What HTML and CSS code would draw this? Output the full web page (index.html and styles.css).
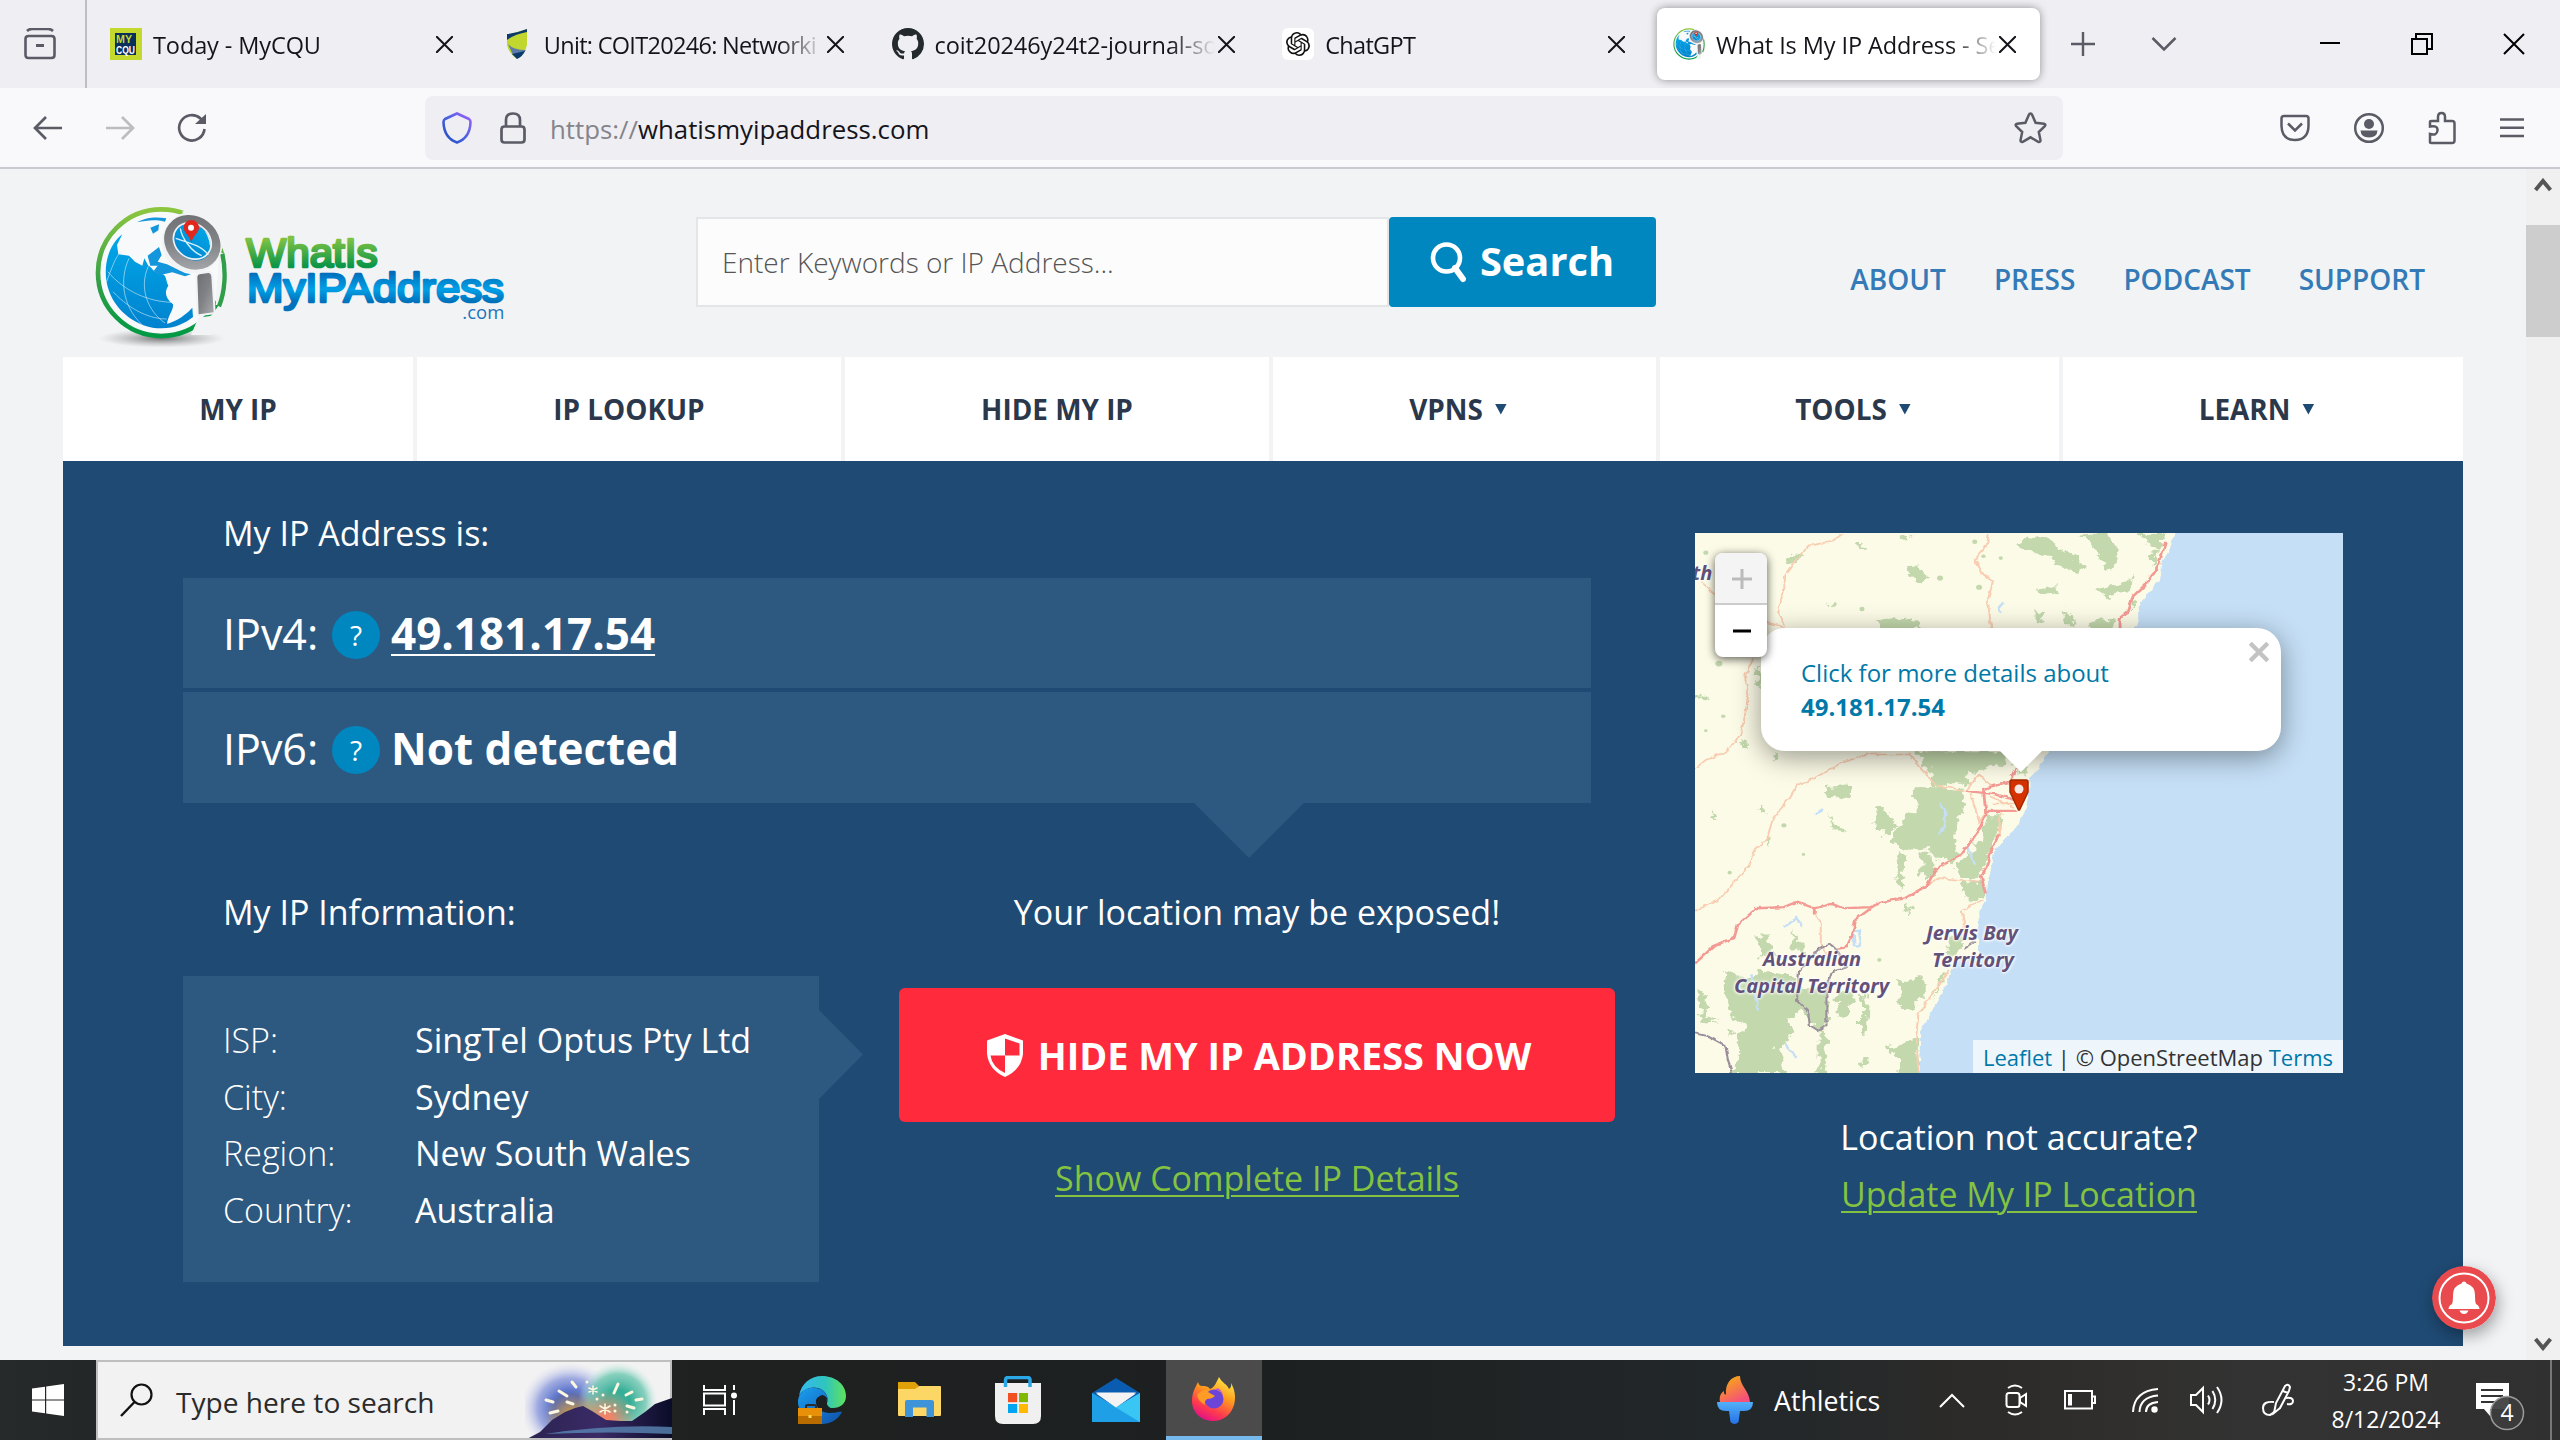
FILE: index.html
```html
<!DOCTYPE html>
<html lang="en">
<head>
<meta charset="utf-8">
<title>What Is My IP Address</title>
<link rel="stylesheet" href="styles.css">
</head>
<body>
<svg class="defs" width="0" height="0" aria-hidden="true">
  <defs>
    <linearGradient id="ring" x1="0" y1="0" x2="0" y2="1"><stop offset="0" stop-color="#8cc63f"/><stop offset=".6" stop-color="#2f9e48"/><stop offset="1" stop-color="#009a44"/></linearGradient>
    <linearGradient id="ocean" x1="0" y1="0" x2="0" y2="1"><stop offset="0" stop-color="#00a8e8"/><stop offset="1" stop-color="#0082cf"/></linearGradient>
    <linearGradient id="steel" x1="0" y1="0" x2="1" y2="1"><stop offset="0" stop-color="#6f7073"/><stop offset=".5" stop-color="#808285"/><stop offset="1" stop-color="#a9abae"/></linearGradient>
    <radialGradient id="shade"><stop offset="0" stop-color="#555" stop-opacity=".8"/><stop offset="1" stop-color="#999" stop-opacity="0"/></radialGradient>
    <symbol id="x" viewBox="0 0 16 16"><path d="M0 0 16 16M16 0 0 16" fill="none" stroke="currentColor" stroke-width="1.9"/></symbol>
    <symbol id="globe" viewBox="30 32 398 402">
      <circle cx="229" cy="233" r="183" fill="#f7f9fa"/>
      <circle cx="229" cy="233" r="190" fill="none" stroke="url(#ring)" stroke-width="14"/>
      <path d="M112 118C70 150 52 215 68 275 88 350 160 400 229 400 270 400 300 385 324 366L322 338C290 372 262 382 246 386 250 360 266 345 264 328 240 310 238 290 250 272 240 250 246 240 228 236 205 234 200 215 190 212L178 190 172 212 150 200 132 182 100 178 96 150Z" fill="url(#ocean)"/>
      <path d="M156 82C190 64 215 66 244 70L240 80C210 72 185 76 156 82ZM196 98 222 88 220 106 204 116ZM188 182 222 156 230 180 218 200 246 208 300 234 318 238 300 244 262 232 226 240 206 228 218 212 196 212Z" fill="#1496dc"/>
      <path d="M68 230C120 290 190 320 262 322M84 290C140 350 200 372 245 372M132 190C104 250 110 330 170 388M190 214C160 280 190 350 240 384M64 262C90 190 98 180 108 170" fill="none" stroke="#cfeaf8" stroke-opacity=".75" stroke-width="2.5"/>
      <path d="M392 330 402 170 430 180 428 330ZM290 50 330 40 330 80ZM318 420 380 420 380 362 340 368Z" fill="#f1f3f5"/>
      <path d="M402 334C420 290 424 230 412 176" fill="none" stroke="#2f9e48" stroke-width="13"/>
      <circle cx="322" cy="142" r="92" fill="#f1f3f5"/>
      <ellipse cx="322" cy="142" rx="73" ry="64" transform="rotate(35 322 142)" fill="url(#ocean)"/>
      <path d="M272 130C300 140 350 150 370 180M286 100C290 130 320 170 350 182M350 90C365 110 375 130 376 150" fill="none" stroke="#d7effa" stroke-width="4"/>
      <ellipse cx="322" cy="142" rx="75" ry="64" transform="rotate(38 322 142)" fill="none" stroke="url(#steel)" stroke-width="27"/>
      <ellipse cx="322" cy="138" rx="60" ry="51" transform="rotate(38 322 138)" fill="none" stroke="#eef1f3" stroke-width="5"/>
      <path d="M344 238 370 234Q378 235 379 245L386 352 341 358 337 246Q338 239 344 238Z" fill="url(#steel)" stroke="#f1f3f5" stroke-width="12" paint-order="stroke"/>
      <path d="M319 142C314 120 296 114 296 98A23 23 0 0 1 342 98C342 114 324 120 319 142Z" fill="#e0281e"/>
      <circle cx="318" cy="98" r="9" fill="#fff"/>
    </symbol>
  </defs>
</svg>

<div class="tabs">
  <div class="view-btn"><svg width="32" height="32" viewBox="0 0 32 32"><path d="M3 3Q5 1 8 1H24Q27 1 29 3M1.500 11Q1.500 8 4.500 8H27.500Q30.500 8 30.500 11V27Q30.500 30 27.500 30H4.500Q1.500 30 1.500 27Z" fill="none" stroke="#5b5b66" stroke-width="2.6"/><path d="M12 16H20V19H12Z" fill="#5b5b66"/></svg></div>
  <div class="tab"><svg class="fav" viewBox="0 0 32 32"><path d="M0 0H32V32H0Z" fill="#c4d82e"/><path d="M5 5H26V27H5Z" fill="#0a2f5c"/><text x="6" y="15" font-family="Liberation Sans" font-weight="700" font-size="10.500" textLength="16" lengthAdjust="spacingAndGlyphs" fill="#c4d82e">MY</text><text x="6" y="25.500" font-family="Liberation Sans" font-weight="700" font-size="10.500" textLength="19" lengthAdjust="spacingAndGlyphs" fill="#fff">CQU</text></svg><span class="tab-text">Today - MyCQU</span><svg class="close"><use href="#x"/></svg></div>
  <div class="tab"><svg class="fav" viewBox="0 0 32 32"><path d="M6 7 26 1V17Q24 26 16 31 8 26 6 17Z" fill="#c1d72e"/><path d="M6 6Q16 5 26 1V4Q14 6 6 12Z" fill="#0b3a6b"/><path d="M7 16Q12 22 25 22L20 28 12 27Z" fill="#5c7ba8"/><path d="M11 26 24 23Q22 28 16 31Z" fill="#0b3a6b"/></svg><span class="tab-text tight">Unit: COIT20246: Networki</span><svg class="close"><use href="#x"/></svg></div>
  <div class="tab"><svg class="fav" viewBox="0 0 16 16"><path fill="#24292e" d="M8 0C3.580 0 0 3.580 0 8c0 3.540 2.290 6.530 5.470 7.590.4.070.550-.170.550-.380 0-.190-.010-.820-.010-1.490-2.010.370-2.530-.490-2.690-.940-.090-.230-.480-.940-.820-1.130-.280-.150-.680-.520-.010-.530.630-.010 1.080.580 1.230.820.720 1.210 1.870.870 2.330.660.070-.520.280-.870.510-1.070-1.780-.2-3.640-.890-3.640-3.950 0-.870.310-1.590.820-2.150-.080-.2-.360-1.020.080-2.120 0 0 .670-.210 2.200.820.640-.180 1.320-.270 2-.270s1.360.090 2 .270c1.530-1.040 2.200-.820 2.200-.820.440 1.100.160 1.920.080 2.120.510.560.820 1.270.820 2.150 0 3.070-1.870 3.750-3.650 3.950.290.250.540.730.540 1.480 0 1.070-.010 1.930-.010 2.200 0 .210.150.460.550.380A8.010 8.010 0 0 0 16 8c0-4.420-3.580-8-8-8z"/></svg><span class="tab-text">coit20246y24t2-journal-so</span><svg class="close"><use href="#x"/></svg></div>
  <div class="tab"><svg class="fav" viewBox="0 0 32 32"><rect width="32" height="32" rx="6" fill="#fff"/><g transform="translate(4 4)" fill="#111"><path d="M22.282 9.821a5.985 5.985 0 0 0-.516-4.910 6.046 6.046 0 0 0-6.510-2.900A6.065 6.065 0 0 0 4.981 4.182a5.985 5.985 0 0 0-3.998 2.900 6.046 6.046 0 0 0 .743 7.097 5.980 5.980 0 0 0 .511 4.911 6.051 6.051 0 0 0 6.515 2.900A5.985 5.985 0 0 0 13.260 24a6.056 6.056 0 0 0 5.772-4.206 5.990 5.990 0 0 0 3.998-2.900 6.056 6.056 0 0 0-.748-7.073zM13.260 22.430a4.476 4.476 0 0 1-2.876-1.041l.142-.080 4.778-2.758a.795.795 0 0 0 .393-.681v-6.737l2.020 1.169a.071.071 0 0 1 .038.052v5.583a4.504 4.504 0 0 1-4.495 4.493zM3.600 18.304a4.471 4.471 0 0 1-.535-3.014l.142.085 4.783 2.758a.771.771 0 0 0 .780 0l5.843-3.368v2.332a.080.080 0 0 1-.033.062L9.740 19.950a4.500 4.500 0 0 1-6.140-1.646zM2.340 7.896a4.485 4.485 0 0 1 2.366-1.973V11.600a.766.766 0 0 0 .388.676l5.815 3.355-2.020 1.168a.076.076 0 0 1-.071 0l-4.830-2.786A4.504 4.504 0 0 1 2.340 7.872zm16.597 3.855-5.833-3.387L15.119 7.200a.076.076 0 0 1 .071 0l4.830 2.791a4.494 4.494 0 0 1-.676 8.105v-5.678a.790.790 0 0 0-.407-.667zm2.010-3.023-.141-.085-4.774-2.782a.776.776 0 0 0-.785 0L9.409 9.230V6.897a.066.066 0 0 1 .028-.061l4.830-2.787a4.500 4.500 0 0 1 6.680 4.660zM8.307 12.863l-2.020-1.164a.080.080 0 0 1-.038-.057V6.075a4.500 4.500 0 0 1 7.375-3.453l-.142.080-4.778 2.758a.795.795 0 0 0-.393.681zm1.097-2.365 2.602-1.500 2.607 1.500v2.999l-2.597 1.500-2.607-1.500z"/></g></svg><span class="tab-text tight">ChatGPT</span><svg class="close"><use href="#x"/></svg></div>
  <div class="tab active"><svg class="fav"><use href="#globe"/></svg><span class="tab-text">What Is My IP Address - Se</span><svg class="close"><use href="#x"/></svg></div>
  <svg class="plus" width="26" height="26" viewBox="0 0 26 26"><path d="M13 1V25M1 13H25" stroke="#5b5b66" stroke-width="2.4"/></svg>
  <svg class="chev" width="26" height="16" viewBox="0 0 26 16"><path d="M1.500 2 13 13.500 24.500 2" fill="none" stroke="#5b5b66" stroke-width="2.500"/></svg>
  <div class="win">
    <svg width="22" height="24" viewBox="0 0 22 24"><path d="M1 11H21" stroke="#000" stroke-width="2"/></svg>
    <svg width="22" height="22" viewBox="0 0 22 22"><path d="M1 6H16V21H1ZM5 6V1H21V16H16" fill="none" stroke="#000" stroke-width="2"/></svg>
    <svg width="22" height="22" viewBox="0 0 22 22"><path d="M1 1 21 21M21 1 1 21" stroke="#000" stroke-width="2"/></svg>
  </div>
</div>

<div class="toolbar">
  <div class="nav-btns">
    <svg width="30" height="26" viewBox="0 0 30 26"><path d="M29 13H2M13 2 2 13 13 24" fill="none" stroke="#5b5b66" stroke-width="2.700"/></svg>
    <svg width="30" height="26" viewBox="0 0 30 26"><path d="M1 13H28M17 2 28 13 17 24" fill="none" stroke="#bcbcc1" stroke-width="2.700"/></svg>
    <svg width="30" height="30" viewBox="0 0 30 30"><path d="M27.500 16A12.700 12.700 0 1 1 23.500 5.500L27 9" fill="none" stroke="#5b5b66" stroke-width="2.700"/><path d="M29 1V11H18Z" fill="#5b5b66"/></svg>
  </div>
  <div class="urlbar">
    <svg width="30" height="32" viewBox="0 0 30 32"><defs><linearGradient id="sh" x1="1" y1="0" x2="0" y2="1"><stop offset="0" stop-color="#a060ff"/><stop offset=".5" stop-color="#4b62e0"/><stop offset="1" stop-color="#1b4fc0"/></linearGradient></defs><path d="M15 1.500 27 7Q28.500 8 28.500 10 28 26 15 30.500 2 26 1.500 10 1.500 8 3 7Z" fill="none" stroke="url(#sh)" stroke-width="2.600"/></svg>
    <svg width="26" height="32" viewBox="0 0 26 32"><path d="M6 14V8Q6 1.500 13 1.500T20 8V14M4.500 14.500H21.500Q24.500 14.500 24.500 17.500V27.500Q24.500 30.500 21.500 30.500H4.500Q1.500 30.500 1.500 27.500V17.500Q1.500 14.500 4.500 14.500Z" fill="none" stroke="#5b5b66" stroke-width="2.700"/></svg>
    <span class="url"><i>https://</i>whatismyipaddress.com</span>
    <svg class="star" width="33" height="32" viewBox="0 0 33 32"><path d="M16.500 1.600Q17.600 1.600 18.200 3L21.600 10.800 30 11.800Q32.200 12.500 30.800 14.200L24.800 20 26.500 28.300Q26.300 30.600 24.200 29.800L16.500 25.300 8.800 29.800Q6.700 30.600 6.500 28.300L8.200 20 2.200 14.200Q.8 12.500 3 11.800L11.400 10.800 14.800 3Q15.400 1.600 16.500 1.600Z" fill="none" stroke="#5b5b66" stroke-width="2.500"/></svg>
  </div>
  <div class="tools">
    <svg width="30" height="28" viewBox="0 0 30 28"><path d="M4 2H26Q28.500 2 28.500 4.500V12Q28 26 15 26T1.500 12V4.500Q1.500 2 4 2ZM8 9.500 15 16.500 22 9.500" fill="none" stroke="#5b5b66" stroke-width="2.500"/></svg>
    <svg width="32" height="32" viewBox="0 0 32 32"><circle cx="16" cy="16" r="13.800" fill="none" stroke="#5b5b66" stroke-width="2.500"/><circle cx="16" cy="12" r="5" fill="#5b5b66"/><path d="M7.500 18.500H24.500Q24 25.500 16 25.500T7.500 18.500Z" fill="#5b5b66"/></svg>
    <svg width="28" height="34" viewBox="0 0 28 34"><path d="M2 31V23Q9 25 9.500 19.500T2 15.500V11Q2 10 3.500 10H10V6Q10 2 13.500 2T17 6V10H24Q26.500 10 26.500 12.500V29.500Q26.500 32 24 32H3.500Q2 32 2 31Z" fill="none" stroke="#5b5b66" stroke-width="2.500"/></svg>
    <svg width="26" height="20" viewBox="0 0 26 20"><path d="M1 1.500H25M1 9.700H25M1 18H25" stroke="#5b5b66" stroke-width="2.500"/></svg>
  </div>
</div>

<div class="viewport">
  <main class="page">
    <header class="head">
      <svg class="logo" width="440" height="155" viewBox="0 0 1320 465">
        <defs>
          <linearGradient id="g1" gradientUnits="userSpaceOnUse" x1="0" y1="122" x2="0" y2="222"><stop offset=".1" stop-color="#7fc242"/><stop offset=".9" stop-color="#0d9648"/></linearGradient>
          <linearGradient id="g2" gradientUnits="userSpaceOnUse" x1="0" y1="228" x2="0" y2="350"><stop offset="0" stop-color="#0068b7"/><stop offset=".45" stop-color="#00a0e6"/><stop offset=".75" stop-color="#0072bc"/></linearGradient>
        </defs>
        <ellipse cx="230" cy="430" rx="190" ry="28" fill="url(#shade)"/>
        <use href="#globe" x="30" y="32" width="398" height="402"/>
        <g font-family="Liberation Sans" stroke-linejoin="round" stroke-linecap="round">
          <text x="484" y="216" font-size="122" textLength="394" lengthAdjust="spacingAndGlyphs" fill="url(#g1)" stroke="url(#g1)" stroke-width="8">WhatIs</text>
          <text x="486" y="322" font-size="122" textLength="771" lengthAdjust="spacingAndGlyphs" fill="url(#g2)" stroke="url(#g2)" stroke-width="8">MyIPAddress</text>
          <text x="1132" y="372" font-size="54" font-family="Open Sans" textLength="126" lengthAdjust="spacingAndGlyphs" fill="#1b75bb">.com</text>
        </g>
      </svg>
      <div class="search">
        <div class="field">Enter Keywords or IP Address...</div>
        <div class="go"><svg width="36" height="42" viewBox="0 0 36 42"><circle cx="16.500" cy="17" r="13.500" fill="none" stroke="#fff" stroke-width="4.600"/><path d="M25 27 33 38" stroke="#fff" stroke-width="6" stroke-linecap="round"/></svg><span>Search</span></div>
      </div>
      <nav class="links"><span>ABOUT</span><span>PRESS</span><span>PODCAST</span><span>SUPPORT</span></nav>
    </header>
    <nav class="menu"><div><span>MY IP</span></div><div><span>IP LOOKUP</span></div><div><span>HIDE MY IP</span></div><div><span>VPNS</span><b></b></div><div><span>TOOLS</span><b></b></div><div><span>LEARN</span><b></b></div></nav>
    <section class="hero">
      <div class="left">
        <h2>My IP Address is:</h2>
        <div class="rows">
          <div class="row"><span class="lab">IPv4:</span><em>?</em><a class="ip">49.181.17.54</a></div>
          <div class="row r2"><span class="lab">IPv6:</span><em>?</em><strong class="nd">Not detected</strong></div>
        </div>
        <div class="lower">
          <div class="info">
            <h2>My IP Information:</h2>
            <dl class="card"><dt>ISP:</dt><dd>SingTel Optus Pty Ltd</dd><dt>City:</dt><dd>Sydney</dd><dt>Region:</dt><dd>New South Wales</dd><dt>Country:</dt><dd>Australia</dd></dl>
          </div>
          <div class="cta">
            <h2>Your location may be exposed!</h2>
            <div class="hide"><svg width="36" height="43" viewBox="0 0 36 43"><path fill="#fff" fill-rule="evenodd" d="M18 0 36 6.500V20Q34 36 18 43 2 36 0 20V6.500ZM18 4.500V21.500H32.500V9.500ZM3.500 21.500Q5 33 18 39V21.500Z"/></svg><span>HIDE MY IP ADDRESS NOW</span></div>
            <a class="glink">Show Complete IP Details</a>
          </div>
        </div>
      </div>
      <div class="right">
        <div class="map">
          <svg class="tiles" viewBox="35 36 1494 1485" preserveAspectRatio="none">
            <defs><filter id="rough" x="-5%" y="-5%" width="110%" height="110%"><feTurbulence type="fractalNoise" baseFrequency=".045" numOctaves="3" seed="4"/><feDisplacementMap in="SourceGraphic" scale="34" xChannelSelector="R" yChannelSelector="G"/></filter>
            <filter id="wob"><feTurbulence type="fractalNoise" baseFrequency=".06" numOctaves="2" seed="9"/><feDisplacementMap in="SourceGraphic" scale="11" xChannelSelector="R" yChannelSelector="G"/></filter></defs>
            <path d="M35 36H1529V1521H35Z" fill="#fcfbe7"/>
            <g fill="#c3d8ad" filter="url(#rough)">
              <path d="M775 65 805 45 850 55 880 80 915 105 935 135 920 150 880 130 850 105 815 90ZM925 40 980 36 1000 60 1010 90 995 140 975 130 970 90 940 60ZM1060 36 1115 36 1110 80 1080 70ZM520 130 545 128 575 160 560 175 530 155ZM505 40 530 36 535 50 515 52ZM820 190 870 180 880 205 850 210ZM960 190 1030 170 1050 150 1035 190 990 215ZM820 250 840 255 830 285 820 280ZM885 245 905 260 915 290 890 290ZM455 280 500 270 530 275 560 300 460 300ZM940 285 1000 270 1000 300 940 300ZM405 65 430 70 425 78 408 76ZM250 90 280 95 270 120 245 110ZM345 228 360 230 355 240ZM170 410 190 400 190 460 178 450ZM35 480 70 490 50 500ZM140 605 160 615 150 628ZM205 640 230 645 218 665ZM1080 90 1110 80 1090 130ZM1040 220 1060 230 1045 250Z"/>
              <path d="M540 636 760 636 745 680 720 670 690 690 665 690 660 730 620 725 585 735 580 700 555 660ZM548 735 600 735 655 740 655 790 640 830 630 870 640 930 610 940 575 905 540 910 485 890 500 850 520 820 550 790 535 760ZM710 815 740 815 730 870 715 910 700 960 680 990 650 985 635 950 680 905 700 850ZM770 640 800 650 800 700 780 700ZM335 735 380 730 400 745 375 770 340 760ZM455 790 480 800 500 840 480 870 450 850ZM345 805 355 835 385 855 350 850ZM500 915 515 930 512 1020 498 1000 505 950ZM555 920 580 910 590 970 570 1000 555 970ZM200 870 220 875 205 895ZM70 790 85 830 75 825ZM650 995 700 1000 700 1040 670 1050 650 1020ZM180 800 195 790 195 810ZM520 1050 535 1060 525 1090ZM620 1150 650 1140 650 1180 620 1210Z"/>
              <path d="M105 1240 150 1260 190 1240 270 1260 280 1290 330 1290 345 1330 340 1390 320 1410 280 1350 250 1370 260 1420 225 1450 240 1521 120 1521 140 1470 130 1420 160 1390 110 1370 120 1340 95 1300ZM165 1140 200 1140 210 1180 230 1200 180 1200 190 1170ZM255 1130 280 1160 295 1200 260 1180ZM360 1290 400 1300 390 1360 365 1370ZM420 1280 435 1340 430 1420 420 1410ZM500 1270 560 1260 560 1310 530 1350 500 1330 515 1300ZM470 1450 550 1430 550 1521 500 1521 510 1480ZM40 1290 65 1310 60 1360 90 1375 50 1380ZM320 1410 340 1420 335 1521 320 1521ZM420 1480 435 1490 425 1510ZM600 1260 630 1230 590 1300 580 1330ZM110 1400 130 1410 110 1420Z"/>
            </g>
            <g fill="#c3d8ad"><circle cx="240" cy="840" r="6"/><circle cx="115" cy="970" r="5"/><circle cx="700" cy="100" r="5"/><circle cx="60" cy="90" r="6"/><circle cx="100" cy="540" r="5"/><circle cx="420" cy="245" r="6"/><circle cx="690" cy="185" r="7"/><circle cx="600" cy="160" r="7"/><circle cx="740" cy="105" r="5"/><circle cx="680" cy="60" r="6"/><circle cx="60" cy="580" r="4"/><circle cx="90" cy="395" r="8"/><circle cx="285" cy="920" r="4"/><circle cx="460" cy="1210" r="5"/></g>
            <path filter="url(#wob)" d="M1529 30V1530H552L556 1440 556 1405 572 1372 590 1330 612 1285 626 1235 645 1205 690 1195 690 1165 685 1140 690 1110 688 1080 705 1045 708 1000 718 960 724 915 745 880 778 845 796 800 806 750 806 710 830 680 850 636 960 420 1040 300 1060 280 1058 235 1080 200 1105 165 1110 120 1130 80 1142 30Z" fill="#c5dff6"/>
            <path d="M1200 36H1529V1521H1200ZM570 1500H1529V1521H565Z" fill="#c5dff6"/>
            <g fill="none" stroke="#c5dff6" stroke-width="6" filter="url(#wob)"><path d="M600 780 612 800 610 840 595 865M745 230Q730 240 740 255M310 810 330 795M400 1130H415V1170H402ZM240 1120 270 1095 280 1120M165 1250 180 1350M240 1440 270 1480M665 900 680 950" /></g>
            <g fill="none" stroke="#f8cdb1" stroke-width="4.500" filter="url(#wob)"><path d="M378 36 350 60 300 70 270 105 243 150 240 200 225 240 240 290M712 36 708 70 680 110 700 150 722 170 710 220 718 300M200 280 240 296M35 1075 90 1045 130 990 160 950 170 910 200 880 215 820 250 770 270 730 310 710 370 670 430 645 530 645 555 680 590 730 660 745 690 700 720 735M35 685 60 660 110 635 140 590 150 540 158 480 150 430 170 380M50 170 80 205M670 750 690 830 710 800M560 1010 600 985 700 995M735 870 740 800 780 800M700 1045 650 1075 655 1110 650 1160M620 1240 590 1290 550 1360 545 1420 550 1521M310 1075 325 1110 325 1170 340 1200M720 780H780M715 760 770 790"/></g>
            <g fill="none" stroke="#f29a93" stroke-width="6.500" filter="url(#wob)"><path d="M1120 60 1105 120 1080 170 1045 210 1035 250 1015 270V300M775 680 760 720 700 740 705 800 780 800M660 745 730 755 770 770M710 800 685 860 650 920 590 960 570 1005 520 1040 470 1050 440 1065 380 1068 350 1056 310 1068 270 1050 240 1065 175 1068 135 1110 125 1150 80 1170 35 1220M310 1070V1085M440 1068 405 1100 398 1140 385 1175 360 1180M735 865 715 920 705 960 695 980 705 1030"/></g>
            <g fill="none" stroke="#9a8f9a" stroke-width="5" filter="url(#wob)"><path d="M345 1165 320 1180 275 1240 270 1320 295 1350 300 1390 320 1405 338 1390V1290L350 1245 385 1230 360 1180ZM35 1412 65 1420 105 1445 110 1480 120 1521M655 1180 680 1160"/></g>
          </svg>
          <span class="place p0">th</span><span class="place p1">Australian</span><span class="place p2">Capital Territory</span><span class="place p3">Jervis Bay</span><span class="place p4">Territory</span>
          <svg class="pin" width="20" height="32" viewBox="0 0 20 32"><path d="M1 3Q1 1 3 1H17Q19 1 19 3V13L10.500 31H9.500L1 13Z" fill="#d63200" stroke="#a32a00" stroke-width="1.500"/><circle cx="10" cy="10" r="4.500" fill="#f6e9e4"/></svg>
          <div class="popup"><span>Click for more details about</span><b>49.181.17.54</b><svg class="px" width="20" height="20" viewBox="0 0 16 16"><path d="M1 1 15 15M15 1 1 15" stroke="#c3c3c3" stroke-width="3.500"/></svg></div>
          <div class="zoomer"><div class="zin"><svg width="20" height="20" viewBox="0 0 20 20"><path d="M10 0V20M0 10H20" stroke="#bbb" stroke-width="3"/></svg></div><div class="zout"><svg width="18" height="20" viewBox="0 0 18 20"><path d="M0 10H18" stroke="#000" stroke-width="3"/></svg></div></div>
          <div class="attr"><a>Leaflet</a> | © OpenStreetMap <a>Terms</a></div>
        </div>
        <p class="loc">Location not accurate?<br><a class="update">Update My IP Location</a></p>
      </div>
    </section>
    <svg class="bell" width="64" height="64" viewBox="0 0 64 64"><circle cx="32" cy="32" r="32" fill="#e84a4d"/><circle cx="32" cy="32" r="24.500" fill="none" stroke="#fff" stroke-width="2"/><path d="M32 15.500Q34 15.500 34.500 17.500 43 20 43 29 43 36 44 38 47.500 40 47.500 43H16.500Q16.500 40 20 38 21 36 21 29 21 20 29.500 17.500 30 15.500 32 15.500ZM27.500 44.500H36.500Q35 48 32 48T27.500 44.500Z" fill="#fff"/></svg>
  </main>
  <div class="scroll">
    <svg width="18" height="14" viewBox="0 0 18 14"><path d="M1.500 12 9 3 16.500 12" fill="none" stroke="#555" stroke-width="4"/></svg>
    <div class="thumb"></div>
    <svg width="18" height="14" viewBox="0 0 18 14"><path d="M1.500 2 9 11 16.500 2" fill="none" stroke="#555" stroke-width="4"/></svg>
  </div>
</div>

<footer class="taskbar">
  <div class="start"><svg width="32" height="32" viewBox="0 0 32 32"><path d="M0 4.500 13 2.700V15.400H0ZM14.200 2.500 32 0V15.400H14.200ZM0 16.600H13V29.300L0 27.500ZM14.200 16.600H32V32L14.200 29.500Z" fill="#fff"/></svg></div>
  <div class="sbox">
    <svg width="34" height="34" viewBox="0 0 34 34"><circle cx="21.500" cy="11.500" r="10" fill="none" stroke="#111" stroke-width="2.200"/><path d="M14.500 19 1 33" stroke="#111" stroke-width="2.400"/></svg>
    <span class="type">Type here to search</span>
    <svg class="fire" width="147" height="76" viewBox="525 2 147 76">
      <defs><radialGradient id="f1"><stop offset=".3" stop-color="#4663c4"/><stop offset=".65" stop-color="#8a98dc" stop-opacity=".8"/><stop offset="1" stop-color="#dfe0f3" stop-opacity="0"/></radialGradient><radialGradient id="f2"><stop offset=".3" stop-color="#35ae97"/><stop offset=".7" stop-color="#6cc7b0" stop-opacity=".8"/><stop offset="1" stop-color="#d5efe8" stop-opacity="0"/></radialGradient><radialGradient id="f3"><stop offset=".2" stop-color="#ef8468"/><stop offset="1" stop-color="#e8a080" stop-opacity="0"/></radialGradient><radialGradient id="f4"><stop offset=".1" stop-color="#d8a03c"/><stop offset="1" stop-color="#d8a03c" stop-opacity="0"/></radialGradient><linearGradient id="f5"><stop offset="0" stop-color="#2a2350"/><stop offset=".5" stop-color="#3a2a66"/><stop offset="1" stop-color="#0a0c28"/></linearGradient></defs>
      <ellipse cx="570" cy="48" rx="50" ry="46" fill="url(#f1)"/><circle cx="618" cy="42" r="40" fill="url(#f2)"/><circle cx="606" cy="60" r="30" fill="url(#f3)"/><ellipse cx="572" cy="58" rx="28" ry="28" fill="url(#f4)"/>
      <path d="M525 80 540 72 552 60 565 52 575 48 583 46 592 51 606 60 620 61 632 61 645 52 655 44 672 38V80Z" fill="url(#f5)"/>
      <path d="M545 74Q610 64 672 67V74Q610 71 545 74Z" fill="#5a86b4" opacity=".8"/>
      <g stroke="#fbf6de" stroke-width="3" stroke-linecap="round"><path d="M572 22 576 27M559 31 567 36M546 40 553 42M550 53 558 51M567 42 573 44M618 24 614 33M632 32 626 35M642 39 636 40M634 48 627 46"/><path d="M593 26V34M589 28 597 32M597 28 589 32M605 44V54M600 46 610 52M610 46 600 52" stroke-width="1.600"/><path d="M597 39V39M603 35V35M615 45V45M615 51V51M587 22V22M627 52V52"/></g>
    </svg>
  </div>
  <div class="tv"><svg width="34" height="32" viewBox="0 0 34 32"><path d="M1 1V6H22V1M1 9.500H22V21.500H1ZM1 31V25H22V31M31 1V6M31 16V31" fill="none" stroke="#fff" stroke-width="2"/><circle cx="31" cy="11.500" r="3" fill="#fff"/></svg></div>
  <div class="app"><svg width="48" height="48" viewBox="0 0 48 48"><defs><linearGradient id="e1"><stop offset="0" stop-color="#36b8f0"/><stop offset=".55" stop-color="#2fc4c0"/><stop offset="1" stop-color="#5fe25a"/></linearGradient><linearGradient id="e2" x1="0" y1="0" x2="1" y2="1"><stop offset="0" stop-color="#1a9ff0"/><stop offset="1" stop-color="#0f4fa8"/></linearGradient></defs><path d="M1 20C3 8 12 0 24 0 38 0 48 9 48 20 48 28 42 32 35 32 30 32 27 30 29 27 31 22 28 14 20 12 12 10 4 14 1 20Z" fill="url(#e1)"/><path d="M0 24C2 14 10 11 18 12 26 13 31 19 29 26 27 20 20 18 18 24 17 32 24 37 32 37 38 37 41 35 44 36 40 44 32 48 24 48 10 48 -1 36 0 24Z" fill="url(#e2)"/><path d="M20 22Q24 16 29 22 27 30 34 33 22 36 19 28Z" fill="#1d2021"/><path d="M8 32V30Q8 29 10 29H16Q18 29 18 30V32" fill="none" stroke="#2b2b2b" stroke-width="2"/><rect y="32" width="24" height="16" fill="#b86c00"/><rect y="32" width="24" height="8" fill="#e89108"/><rect x="10.500" y="39" width="3" height="3" fill="#ffd75a"/></svg></div>
  <div class="app"><svg width="44" height="36" viewBox="0 0 44 36"><path d="M0 0H17L21 4 17 8H0Z" fill="#e0a008"/><path d="M0 7H17L21 4H42Q43 4 43 5V33Q43 34 42 34H1Q0 34 0 33Z" fill="#fdd766"/><path d="M7 35V20Q7 18 9 18H33Q36 18 36 20V35H28.500V25.500H15V35Z" fill="#3f93d8"/></svg></div>
  <div class="app"><svg width="46" height="48" viewBox="0 0 46 48"><path d="M0 7H46V40Q46 48 38 48H8Q0 48 0 40Z" fill="#f0f0f0"/><path d="M10.500 11V4Q10.500 1.500 13 1.500H32Q35 1.500 35 4V11" fill="none" stroke="#2aa8e8" stroke-width="3.500"/><path d="M13 17H22.200V26.200H13Z" fill="#f25022"/><path d="M24 17H33V26.200H24Z" fill="#7fba00"/><path d="M13 28H22.200V37H13Z" fill="#00a4ef"/><path d="M24 28H33V37H24Z" fill="#ffb900"/></svg></div>
  <div class="app"><svg width="48" height="44" viewBox="0 0 48 44"><path d="M0 15 24 0 48 15 24 30Z" fill="#0a5cb0"/><path d="M0 15 24 29 48 15V44H0Z" fill="#35b4f0"/><path d="M4 14.500H44L24 29Z" fill="#f3f3f3"/><path d="M0 15 48 44H0Z" fill="#1f9fe6"/><path d="M4 15.500H44L24 29.500Z" fill="#f3f3f3"/><path d="M24 29.500 48 15V44Z" fill="#39c6f4"/></svg></div>
  <div class="app on"><svg width="44" height="44" viewBox="0 0 44 44"><defs><linearGradient id="ff" x1=".8" y1="0" x2=".3" y2="1"><stop offset="0" stop-color="#fff04a"/><stop offset=".4" stop-color="#ff9a1e"/><stop offset=".75" stop-color="#ff3850"/><stop offset="1" stop-color="#e0108a"/></linearGradient></defs><path d="M27 0C30 6 35 7 37 12 40 10 39 8 39 6 43 13 44 20 42 28 39 38 31 44 21 44 9 44 0 35 0 24 0 16 3 11 6 5 7 8 8 9 10 9 13 9 16 9 18 12 22 11 24 6 27 0Z" fill="url(#ff)"/><circle cx="22" cy="22" r="9.500" fill="#6a45d8"/><path d="M22 12.500Q29 12 31 19 31 16 29 14 27 10 22 12.500Z" fill="#b54cf0"/><path d="M5 18Q10 12 17 13L16 15 23 19Q20 22 15 22 12 24 13 28 6 24 5 18Z" fill="#ff9c26"/></svg></div>
  <div class="news"><svg width="36" height="48" viewBox="0 0 36 48"><defs><linearGradient id="t1" x1="0" y1="0" x2=".6" y2="1"><stop offset="0" stop-color="#f8b800"/><stop offset="1" stop-color="#f5507a"/></linearGradient><linearGradient id="t2" x1="0" y1="0" x2="0" y2="1"><stop offset="0" stop-color="#52b0f8"/><stop offset="1" stop-color="#2472e8"/></linearGradient></defs><path d="M3 26C2 20 4 17 7 15 7 19 8 19 9 18 8 8 14 0 23 0 23 10 32 14 33 26Z" fill="url(#t1)"/><path d="M0 26H36Q36 35 27 35H9Q0 35 0 26ZM12 35H23L21.500 46Q17.500 50 13.500 46Z" fill="url(#t2)"/></svg><span>Athletics</span></div>
  <div class="ti w64"><svg width="26" height="15" viewBox="0 0 26 15"><path d="M1 14 13 2 25 14" fill="none" stroke="#fff" stroke-width="2"/></svg></div>
  <div class="ti w64"><svg width="24" height="32" viewBox="0 0 24 32"><path d="M4 4Q11 -1 18 4M4 28Q11 33 18 28M5 9H13Q15.500 9 15.500 11.500V20.500Q15.500 23 13 23H5Q2.500 23 2.500 20.500V11.500Q2.500 9 5 9ZM16 14 22 10V22L16 18Z" fill="none" stroke="#fff" stroke-width="2"/></svg></div>
  <div class="ti w64"><svg width="32" height="20" viewBox="0 0 32 20"><path d="M1 1H28V18.500H1ZM28 6.500H31V13H28" fill="none" stroke="#fff" stroke-width="2"/><path d="M4 4H8V15.500H4Z" fill="#fff"/></svg></div>
  <div class="ti w66"><svg width="28" height="28" viewBox="0 0 28 28"><path d="M2 26Q3 5 27 3M8.500 26Q9 11 27 9.500M15 26Q15 17 27 16" fill="none" stroke="#fff" stroke-width="2"/><circle cx="23.500" cy="23.500" r="3.200" fill="#fff"/></svg></div>
  <div class="ti w58"><svg width="36" height="30" viewBox="0 0 36 30"><path d="M2 10H7L14 3V27L7 20H2ZM19 10.500Q22 15 19 19.500M23.500 6Q29 15 23.500 24M28 2Q37 15 28 28" fill="none" stroke="#fff" stroke-width="2"/></svg></div>
  <div class="ti pen"><svg width="34" height="34" viewBox="0 0 34 34"><path d="M13 30 15 20 24 3Q27 0 29 4L28 8 19 25ZM22 8 27 10M13 19Q2 18 2 25T9 32Q13 30 14 27M25 15Q32 14 32 18T26 21" fill="none" stroke="#fff" stroke-width="2"/></svg></div>
  <div class="clock"><span>3:26 PM</span><span>8/12/2024</span></div>
  <div class="notif"><svg width="50" height="54" viewBox="0 0 50 54"><path d="M0 1H33V27H14V34L8 27H0Z" fill="#fff"/><path d="M5 8H27M5 14H27M5 20H20" stroke="#333" stroke-width="2"/><circle cx="31" cy="31" r="16.500" fill="#3c3c3c" fill-opacity=".93" stroke="#9c9c9c" stroke-width="1.500"/><text x="31" y="39" font-family="Open Sans" font-size="23" fill="#fff" text-anchor="middle">4</text></svg></div>
</footer>
</body>
</html>
```
FILE: styles.css
```css
* { box-sizing: border-box; }
body {
  margin: 0;
  width: 2560px;
  height: 1440px;
  overflow: hidden;
  display: flex;
  flex-direction: column;
  font-family: "Open Sans", "Noto Sans", sans-serif;
  background: #f1f3f5;
}
svg { display: block; flex: none; }
.defs { position: absolute; }
span, a, b, em { white-space: nowrap; }

/* tab strip */
.tabs { height: 88px; background: #efeef3; display: flex; align-items: center; flex: none; }
.view-btn { width: 87px; height: 88px; padding-left: 24px; display: flex; align-items: center; border-right: 2px solid #bdbdc3; margin-right: 7px; }
.tab { width: 383px; height: 72px; margin-right: 7.750px; padding: 0 24px 0 16px; display: flex; align-items: center; border-radius: 8px; flex: none; }
.active { background: #fff; box-shadow: 0 0 8px rgba(0, 0, 0, .4); }
.fav { width: 32px; height: 32px; margin-right: 11px; }
.tab-text { flex: 1; min-width: 0; overflow: hidden; padding-top: 2px; font-size: 23.500px; letter-spacing: -.1px; line-height: 40px; color: #15141a; -webkit-mask-image: linear-gradient(90deg, #000 calc(100% - 48px), transparent calc(100% - 3px)); mask-image: linear-gradient(90deg, #000 calc(100% - 48px), transparent calc(100% - 3px)); }
.tight { letter-spacing: -.7px; }
.close { width: 17px; height: 17px; color: #15141a; }
.plus { margin-left: 22px; }
.chev { margin-left: 55px; }
.win { margin-left: auto; padding-right: 35px; display: flex; align-items: center; gap: 70px; }

/* navigation toolbar */
.toolbar { height: 81px; background: #f9f9fb; border-bottom: 2px solid #c9c9cf; display: flex; align-items: center; flex: none; }
.nav-btns { width: 425px; padding-left: 33px; display: flex; align-items: center; gap: 42px; }
.urlbar { width: 1638px; height: 64px; padding: 0 16px 0 17px; background: #efeef3; border-radius: 8px; display: flex; align-items: center; }
.urlbar svg + svg { margin-left: 28px; }
.url { margin-left: 24px; padding-top: 3px; font-size: 25.800px; color: #15141a; }
.url i { font-style: normal; color: #85848b; }
.urlbar .star { margin-left: auto; }
.tools { margin-left: auto; padding-right: 35px; display: flex; align-items: center; gap: 43px; }

.viewport { height: 1191px; display: flex; flex: none; }
.page { width: 2526px; position: relative; }
.scroll { width: 34px; background: #f0f0f0; display: flex; flex-direction: column; align-items: center; padding: 9px 0; }
.thumb { width: 34px; height: 112px; background: #cdcdcd; margin: 33px 0 auto; }

/* site header */
.head { height: 188px; padding: 26px 101px 0 85px; display: flex; align-items: flex-start; }
.search { margin: 22px 0 0 171px; display: flex; }
.field { width: 693px; height: 90px; padding-left: 24px; border: 2px solid #e4e5e7; background: #fcfcfc; font-size: 28px; font-weight: 300; line-height: 87px; color: #555; }
.go { width: 267px; height: 90px; padding-right: 1px; background: #0087bf; border-radius: 4px; display: flex; align-items: center; justify-content: center; gap: 14px; color: #fff; font-size: 39.800px; font-weight: 700; line-height: 88px; }
.go span { padding-bottom: 2px; }
.links { margin: 59px 0 0 auto; display: flex; gap: 48px; font-size: 28px; font-weight: 600; line-height: 50px; color: #337ab7; }

.menu { margin-left: 63px; width: 2400px; height: 104px; display: grid; grid-template-columns: 350px 424px 424px 383px 399px 400px; gap: 4px; }
.menu div { background: #fff; display: flex; align-items: center; justify-content: center; font-size: 27.900px; font-weight: 700; color: #2b384c; }
.menu b { width: 12px; height: 11px; margin: 0 13px 0 12px; background: #1f4a73; clip-path: polygon(0 0, 100% 0, 50% 100%); }

/* main panel */
.hero { margin-left: 63px; width: 2400px; height: 885px; padding: 42px 0 0 120px; background: #1f4a73; color: #fff; display: flex; gap: 80px; font-size: 34px; }
.left { width: 1432px; }
h2 { margin: 0; font-size: 34px; font-weight: 400; line-height: 60px; }
.left > h2 { padding-left: 40px; margin-bottom: 15px; }
.rows { width: 1408px; display: flex; flex-direction: column; gap: 4px; position: relative; }
.rows::after { content: ""; position: absolute; left: 1011px; top: 225px; width: 110px; height: 55px; background: #2d5980; clip-path: polygon(0 0, 100% 0, 50% 100%); }
.row { height: 110px; padding-left: 40px; background: #2d5980; display: flex; align-items: center; font-size: 44px; }
.r2 { height: 111px; }
.r2 .lab, .r2 .nd { padding-top: 1px; }
.lab { font-weight: 400; font-size: 43px; width: 109px; }
.row em { width: 48px; height: 48px; margin: 4px 11px 0 0; border-radius: 50%; background: #0087bf; font-size: 28px; line-height: 48px; font-style: normal; text-align: center; }
.ip { font-weight: 700; text-decoration: underline; text-decoration-thickness: 2px; text-underline-offset: 4px; }
.nd { font-size: 44px; font-weight: 700; white-space: nowrap; }
.lower { margin-top: 79px; display: flex; justify-content: space-between; }
.info { width: 636px; }
.info h2 { padding-left: 40px; margin-bottom: 34px; }
.card { margin: 0; height: 306px; padding: 36px 0 0 40px; background: #2d5980; display: grid; grid-template-columns: 192px 1fr; grid-auto-rows: 56.500px; line-height: 56.500px; align-content: start; position: relative; }
.card::after { content: ""; position: absolute; left: 636px; top: 34px; width: 44px; height: 89px; background: #2d5980; clip-path: polygon(0 0, 100% 50%, 0 100%); }
dt { font-weight: 300; }
dd { margin: 0; }
.cta { width: 716px; text-align: center; }
.cta h2 { margin-bottom: 46px; }
.hide { height: 134px; padding-left: 4px; border-radius: 6px; background: #ff2a3b; display: flex; align-items: center; justify-content: center; gap: 15px; font-size: 37.900px; font-weight: 700; }
.glink { display: block; margin-top: 26px; line-height: 60px; }
.glink, .update { color: #84c341; text-decoration: underline; text-decoration-thickness: 2px; text-underline-offset: 4px; }

/* map card */
.right { width: 648px; padding-top: 30px; }
.map { position: relative; width: 648px; height: 540px; overflow: hidden; }
.tiles { width: 648px; height: 540px; }
.place { position: absolute; font: italic 700 20px/26px "Noto Sans", sans-serif; color: #62527a; text-shadow: 0 0 3px #fff, 0 0 3px #fff, 0 0 4px #fff; }
.p0 { left: -3px; top: 27px; }
.p1 { left: 68px; top: 413px; }
.p2 { left: 39px; top: 440px; }
.p3 { left: 231px; top: 387px; }
.p4 { left: 237px; top: 414px; }
.pin { position: absolute; left: 314px; top: 246px; }
.popup { position: absolute; left: 66px; top: 95px; width: 520px; height: 123px; padding: 28px 0 0 40px; border-radius: 24px; background: #fff; box-shadow: 0 6px 28px rgba(0, 0, 0, .4); color: #0078a8; font-size: 24px; line-height: 34px; display: flex; flex-direction: column; }
.popup::after { content: ""; position: absolute; left: 238px; top: 122px; width: 44px; height: 22px; background: #fff; clip-path: polygon(0 0, 100% 0, 50% 100%); }
.px { position: absolute; right: 12px; top: 14px; }
.zoomer { position: absolute; left: 20px; top: 20px; width: 52px; height: 104px; border-radius: 8px; overflow: hidden; box-shadow: 0 2px 10px rgba(0, 0, 0, .65); background: #fff; }
.zin, .zout { height: 52px; display: flex; align-items: center; justify-content: center; padding-left: 2px; }
.zin { background: #f4f4f4; border-bottom: 2px solid #ccc; padding-top: 2px; }
.attr { position: absolute; right: 0; bottom: 0; width: 370px; height: 33px; background: rgba(255, 255, 255, .7); color: #333; font-size: 22px; line-height: 34px; text-align: center; white-space: nowrap; }
.attr a { color: #0078a8; }
.loc { margin: 36px 0 0; text-align: center; line-height: 57px; }
.bell { position: absolute; left: 2432px; top: 1097px; border-radius: 50%; box-shadow: 2px 6px 16px rgba(0, 0, 0, .35); }

/* taskbar */
.taskbar { height: 80px; flex: none; display: flex; align-items: center; color: #fff; background: linear-gradient(90deg, #262a2b 0, #232626 4%, #1f2121 28%, #1d2020 50%, #22272a 68%, #2d2b29 78%, #333 88%, #303030 100%); }
.start { width: 96px; padding-left: 32px; }
.sbox { width: 576px; height: 80px; padding-left: 22px; border: 2px solid #bfbfbf; background: #f2f2f2; display: flex; align-items: center; }
.type { margin-left: 22px; padding-top: 3px; font-size: 28.100px; color: #2b2b2b; }
.fire { margin-left: auto; margin-right: -2px; }
.tv { width: 96px; margin-right: 6px; display: flex; justify-content: center; }
.app { width: 96px; height: 80px; margin-right: 2px; display: flex; align-items: center; justify-content: center; }
.on { background: #4b4b4b; border-bottom: 4px solid #76b9ed; padding-top: 2px; }
.news { width: 202px; margin-left: auto; display: flex; align-items: center; gap: 21px; font-size: 26.700px; }
.news svg { margin-left: -1px; }
.ti { height: 80px; display: flex; align-items: center; justify-content: center; }
.w64 { width: 64px; }
.w66 { width: 66px; }
.w58 { width: 58px; }
.pen { width: 64px; margin-left: 10px; }
.clock { width: 128px; margin: 0 26px 0 12px; padding-top: 2px; display: flex; flex-direction: column; align-items: center; font-size: 23px; line-height: 37px; }
.notif { width: 76px; height: 80px; padding-top: 22px; border-right: 2px solid #777; margin-right: 8px; }
```
